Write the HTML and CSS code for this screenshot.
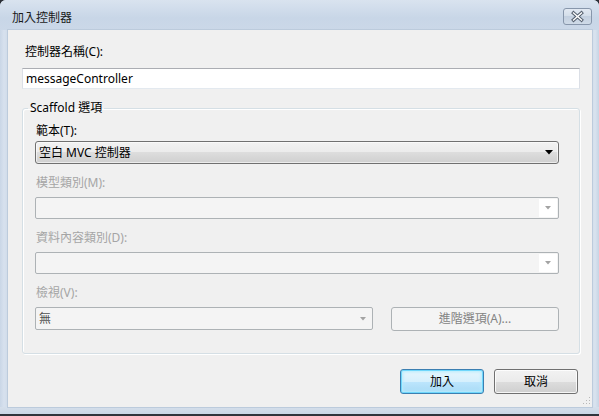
FILE: index.html
```html
<!DOCTYPE html>
<html>
<head>
<meta charset="utf-8">
<link rel="stylesheet" href="styles.css">
</head>
<body>
<div class="window">
  <div class="titlebar">
    <span class="title">加入控制器</span>
    <div class="close">
      <svg width="29" height="17" viewBox="0 0 29 17">
        <defs>
          <linearGradient id="cg" x1="0" y1="0" x2="0" y2="1">
            <stop offset="0" stop-color="#e3eaf3"/>
            <stop offset="0.5" stop-color="#d3dde9"/>
            <stop offset="0.5" stop-color="#c3d0e0"/>
            <stop offset="1" stop-color="#d0dbe8"/>
          </linearGradient>
        </defs>
        <rect x="0.5" y="0.5" width="28" height="16" rx="2.5" fill="url(#cg)" stroke="#8796ab"/>
        <path d="M10.5 5 L18.5 12 M18.5 5 L10.5 12" stroke="#55606f" stroke-width="3.4" stroke-linecap="square"/>
        <path d="M10.5 5 L18.5 12 M18.5 5 L10.5 12" stroke="#ffffff" stroke-width="1.4" stroke-linecap="square"/>
      </svg>
    </div>
  </div>
  <div class="client">
    <div class="lbl first">控制器名稱(C):</div>
    <div class="textbox">messageController</div>
    <fieldset class="group">
      <legend>Scaffold 選項</legend>
      <div class="group-body">
        <div class="field">
          <div class="lbl tight">範本(T):</div>
          <div class="combo">
            <span class="combo-text">空白 MVC 控制器</span>
            <span class="arrow"><svg width="8" height="5" viewBox="0 0 8 5"><path d="M0 0 H8 L4 4.5 Z" fill="#000"/></svg></span>
          </div>
        </div>
        <div class="field">
          <div class="lbl dis">模型類別(M):</div>
          <div class="combo disabled">
            <span class="combo-text"></span>
            <span class="arrow white"><svg width="6" height="4" viewBox="0 0 6 4"><path d="M0 0 H6 L3 3.5 Z" fill="#a3a3a3"/></svg></span>
          </div>
        </div>
        <div class="field">
          <div class="lbl dis">資料內容類別(D):</div>
          <div class="combo disabled">
            <span class="combo-text"></span>
            <span class="arrow white"><svg width="6" height="4" viewBox="0 0 6 4"><path d="M0 0 H6 L3 3.5 Z" fill="#a3a3a3"/></svg></span>
          </div>
        </div>
        <div class="field">
          <div class="lbl dis">檢視(V):</div>
          <div class="row">
            <div class="combo disabled view">
              <span class="combo-text dimtext">無</span>
              <span class="arrow"><svg width="6" height="4" viewBox="0 0 6 4"><path d="M0 0 H6 L3 3.5 Z" fill="#a3a3a3"/></svg></span>
            </div>
            <div class="btn disabled adv">進階選項(A)...</div>
          </div>
        </div>
      </div>
    </fieldset>
    <div class="actions">
      <div class="btn default">加入</div>
      <div class="btn">取消</div>
    </div>
    <svg class="grip" width="8" height="8" viewBox="0 0 8 8">
      <rect x="6" y="0" width="1" height="1" fill="#b8b8b8"/>
      <rect x="3" y="3" width="1" height="1" fill="#b8b8b8"/>
      <rect x="6" y="3" width="1" height="1" fill="#b8b8b8"/>
      <rect x="0" y="6" width="1" height="1" fill="#b8b8b8"/>
      <rect x="3" y="6" width="1" height="1" fill="#b8b8b8"/>
      <rect x="6" y="6" width="1" height="1" fill="#b8b8b8"/>
    </svg>
  </div>
  <div class="bottomframe"></div>
  <div class="desk"></div>
</div>
</body>
</html>
```
FILE: styles.css
```css
* { box-sizing: border-box; }
html, body { margin: 0; padding: 0; }
body {
  font-family: "Noto Sans", "Noto Sans CJK TC", sans-serif;
  font-size: 12px;
  color: #000;
  background: #2b2f36;
}
.window {
  width: 599px;
  height: 416px;
  display: flex;
  flex-direction: column;
  background: linear-gradient(90deg, #c9d6e6 0px, #d7e1ee 4px, #cfdbe9 8px, #cfdbe9 591px, #d9e3ef 595px, #c7d4e4 599px);
  border-top-left-radius: 6px;
  border-top-right-radius: 6px;
  overflow: hidden;
}
.titlebar {
  height: 30px;
  display: flex;
  align-items: flex-start;
  padding-left: 12px;
  background: linear-gradient(#d9e3ef, #c8d6e7 60%, #cbd8e8);
}
.title {
  margin-top: 10px;
  line-height: 16px;
  font-size: 12px;
  color: #1a1a1a;
}
.close {
  margin-left: auto;
  margin-right: 7px;
  margin-top: 8px;
  width: 29px;
  height: 17px;
  display: flex;
}
.client {
  position: relative;
  flex: 1;
  margin: 0 7px 0 8px;
  background: #f0f0f0;
  padding: 14px 12px 0 14px;
  display: flex;
  flex-direction: column;
  box-shadow: 0 0 0 1px #bccbdc;
}
.lbl {
  line-height: 16px;
  height: 16px;
  white-space: nowrap;
}
.lbl.first { margin-bottom: 8px; padding-left: 3px; }
.lbl.tight { margin-bottom: 2px; padding-left: 1px; }
.lbl.dis { color: #a5a5a5; margin-bottom: 6px; padding-left: 1px; }
.textbox {
  height: 21px;
  line-height: 19px;
  padding-left: 3px;
  background: #fff;
  border: 1px solid #dbdfe6;
  border-top-color: #abadb3;
  border-bottom-color: #e3e9ef;
}
.group {
  margin: 11px 0 0 0;
  padding: 7px 20px 22px 0;
  border: 1px solid #d5dfe5;
  border-radius: 3px;
  box-shadow: inset 1px 1px 0 #fff, 1px 1px 0 #fff;
  min-width: 0;
}
.group legend {
  margin-left: 5px;
  padding: 0 2px;
  line-height: 16px;
  height: 16px;
}
.group-body { padding-left: 12px; }
.field + .field { margin-top: 11px; }
.combo {
  height: 23px;
  display: flex;
  align-items: center;
  border: 1px solid #707070;
  border-radius: 3px;
  background: linear-gradient(#f2f2f2, #ebebeb 50%, #dddddd 50%, #cfcfcf);
  box-shadow: inset 0 0 0 1px rgba(255,255,255,0.6);
}
.combo.disabled {
  height: 22px;
  border-color: #adb2b5;
  background: #f4f4f4;
  box-shadow: none;
  border-radius: 2px;
}
.combo.view { height: 23px; flex: 0 0 338px; }
.combo-text {
  flex: 1;
  padding-left: 3px;
  line-height: 16px;
}
.dimtext { color: #505050; }
.arrow {
  width: 17px;
  align-self: stretch;
  display: flex;
  align-items: center;
  justify-content: center;
  padding-right: 2px;
}
.arrow.white { background: #fff; width: 18px; padding-right: 0; margin: 1px 1px 1px 0; }
.row {
  display: flex;
  gap: 18px;
}
.btn {
  height: 25px;
  width: 84px;
  display: flex;
  align-items: center;
  justify-content: center;
  border: 1px solid #707070;
  border-radius: 3px;
  background: linear-gradient(#f2f2f2, #ebebeb 50%, #dddddd 50%, #cfcfcf);
  box-shadow: inset 0 0 0 1px rgba(255,255,255,0.8);
  line-height: 16px;
}
.btn.adv {
  flex: 1;
  height: 24px;
  border-color: #adb2b5;
  background: #f4f4f4;
  box-shadow: none;
  color: #838383;
}
.btn.default {
  border-color: #3c7fb1;
  background: linear-gradient(#e7f6fd, #d6f0fd 50%, #bde6fd 50%, #a7d9f5);
  box-shadow: inset 0 0 0 1px #6fd7fc, inset 0 0 3px 2px #b6ecfd;
}
.actions {
  display: flex;
  justify-content: flex-end;
  gap: 10px;
  margin-top: 15px;
  padding-right: 2px;
}
.grip {
  position: absolute;
  right: 1px;
  bottom: 2px;
}
.bottomframe {
  height: 7px;
  background: linear-gradient(#d5dfeb, #c9d6e6);
}
.desk {
  height: 2px;
  background: #2f343c;
}
```
